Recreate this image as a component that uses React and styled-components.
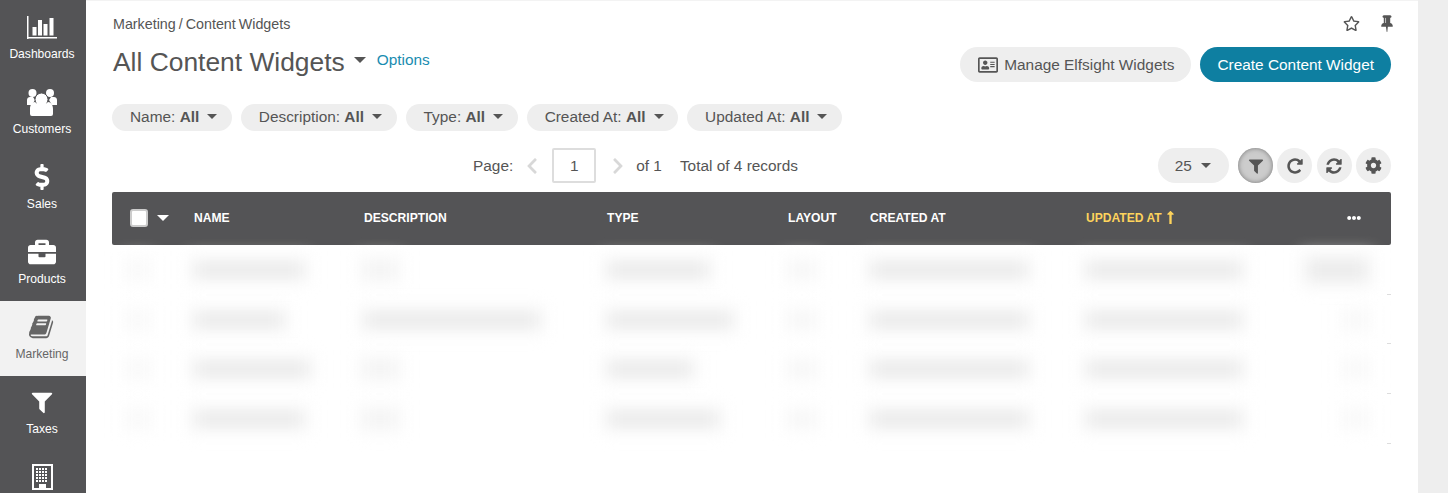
import styled, { createGlobalStyle } from "styled-components";
import {
  FaBriefcase,
  FaChevronLeft,
  FaChevronRight,
  FaCog,
  FaDollarSign,
  FaEllipsisH,
  FaLongArrowAltUp,
  FaRegAddressCard,
  FaRegStar,
} from "react-icons/fa";

const GlobalStyle = createGlobalStyle`
  html, body {
    margin: 0;
    height: 100%;
    overflow: hidden;
    background: #fff;
    font-family: "Liberation Sans", Arial, sans-serif;
    color: #555;
  }
`;

const Page = styled.div`
  display: flex;
  height: 493px;
  overflow: hidden;
`;

const Sidebar = styled.nav`
  width: 86px;
  flex: none;
  padding-top: 1px;
  background: #545456;
  overflow: hidden;
`;

const NavItem = styled.a`
  display: flex;
  flex-direction: column;
  align-items: center;
  height: 75px;
  padding: 11px 2px 0 0;
  box-sizing: border-box;
  font-size: 12.1px;
  line-height: 14px;
  color: ${(p) => (p.$active ? "#666" : "#fff")};
  background: ${(p) => (p.$active ? "#f2f2f2" : "transparent")};
`;

const NavIcon = styled.span`
  display: flex;
  align-items: center;
  justify-content: center;
  height: 30px;
  margin-bottom: 5px;
  font-size: ${(p) => p.$size || 28}px;
`;

const Main = styled.main`
  flex: none;
  width: 1332px;
  box-sizing: border-box;
  padding: 14px 27px 0 26px;
  border-top: 1px solid #f3f3f3;
`;

const Gutter = styled.div`
  flex: 1;
  background: #eee;
`;

const TopBar = styled.div`
  display: flex;
  justify-content: space-between;
  height: 18px;
`;

const Crumbs = styled.div`
  font-size: 14.3px;
  line-height: 18px;
  word-spacing: -1px;
  margin-left: 1px;
`;

const TopIcons = styled.div`
  display: flex;
  align-items: center;
  gap: 18px;
  margin: -2px -5px 0 0;
  font-size: 17px;
  color: #555;
`;

const HeadRow = styled.div`
  display: flex;
  justify-content: space-between;
  height: 71px;
`;

const TitleGroup = styled.div`
  display: flex;
  align-items: flex-start;
  margin-top: 14px;
`;

const Title = styled.h1`
  margin: 0 0 0 1px;
  font-size: 26.4px;
  line-height: 30px;
  font-weight: 400;
  color: #555;
`;

const Caret = styled.span`
  display: inline-block;
  flex: none;
  width: 0;
  height: 0;
  border-left: ${(p) => p.$size || 5}px solid transparent;
  border-right: ${(p) => p.$size || 5}px solid transparent;
  border-top: ${(p) => p.$size || 5}px solid ${(p) => p.$color || "#555"};
`;

const TitleCaret = styled(Caret)`
  margin: 10px 0 0 9px;
`;

const OptionsLink = styled.a`
  margin: 4px 0 0 11px;
  font-size: 15.4px;
  line-height: 18px;
  color: #1a8cb0;
`;

const Actions = styled.div`
  display: flex;
  gap: 9px;
  margin-top: 14px;
`;

const Pill = styled.button`
  display: flex;
  align-items: center;
  gap: 6px;
  height: 35px;
  padding: 0 17px;
  border: 0;
  border-radius: 18px;
  font: 15.4px "Liberation Sans", Arial, sans-serif;
  color: ${(p) => (p.$primary ? "#fff" : "#555")};
  background: ${(p) => (p.$primary ? "#0e7fa1" : "#eee")};
  svg {
    margin-left: 1px;
    font-size: 20px;
  }
`;

const Filters = styled.div`
  display: flex;
  gap: 9px;
`;

const Chip = styled.div`
  display: flex;
  align-items: center;
  gap: 8px;
  height: 27px;
  box-sizing: border-box;
  padding: 0 14.5px 2px 18px;
  border-radius: 14px;
  background: #eee;
  font-size: 15.4px;
  white-space: pre;
  b {
    font-weight: 700;
  }
`;

const Toolbar = styled.div`
  display: flex;
  align-items: center;
  height: 35px;
  margin-top: 17px;
  font-size: 15.4px;
`;

const Pager = styled.div`
  display: flex;
  align-items: center;
  margin-left: 361px;
`;

const PagerArrow = styled.span`
  display: flex;
  margin: ${(p) => p.$margin};
  font-size: 18px;
  color: #d8d8d8;
`;

const PageBox = styled.div`
  width: 44px;
  height: 35px;
  box-sizing: border-box;
  border: 2px solid #ddd;
  border-radius: 2px;
  text-align: center;
  line-height: 31px;
`;

const Total = styled.span`
  margin-left: 18px;
`;

const Tools = styled.div`
  display: flex;
  align-items: center;
  gap: 4.33px;
  margin-left: auto;
`;

const PageSize = styled.div`
  display: flex;
  align-items: center;
  gap: 9px;
  width: 71px;
  height: 35px;
  box-sizing: border-box;
  padding-left: 17px;
  margin-right: 5px;
  border-radius: 18px;
  background: #eee;
`;

const RoundButton = styled.button`
  display: flex;
  align-items: center;
  justify-content: center;
  width: 35px;
  height: 35px;
  padding: 0;
  border: 0;
  border-radius: 50%;
  font-size: 17px;
  color: #555;
  background: ${(p) => (p.$active ? "#ccc" : "#eee")};
  box-shadow: ${(p) => (p.$active ? "inset 0 0 5px #777" : "none")};
`;

const columns = "64px 170px 243px 181px 82px 216px 1fr 40px";

const TableHead = styled.div`
  display: grid;
  grid-template-columns: ${columns};
  align-items: center;
  height: 53px;
  box-sizing: border-box;
  margin-top: 9px;
  padding: 0 30px 2px 18px;
  border-radius: 2px;
  background: #545456;
  font-size: 12.1px;
  font-weight: 700;
  color: #fff;
`;

const CheckCell = styled.div`
  display: flex;
  align-items: center;
  gap: 9px;
`;

const CheckBox = styled.span`
  width: 14px;
  height: 14px;
  border: 2px solid #ccc;
  border-radius: 3px;
  background: #fff;
`;

const HeadCell = styled.div`
  display: flex;
  align-items: center;
  gap: 1px;
  color: ${(p) => (p.$sorted ? "#fdd35c" : "#fff")};
  justify-content: ${(p) => (p.$end ? "flex-end" : "flex-start")};
  svg {
    font-size: ${(p) => (p.$end ? 14 : 15)}px;
  }
`;

const Row = styled.div`
  display: grid;
  grid-template-columns: ${columns};
  align-items: center;
  height: 49.7px;
  padding: 0 26px 0 18px;
  background: linear-gradient(#ddd, #ddd) right bottom / 4px 1px no-repeat;
`;

const Smudge = styled.div`
  height: ${(p) => p.$h || 12}px;
  width: ${(p) => p.$w}px;
  margin-left: ${(p) => p.$x || 0}px;
  justify-self: ${(p) => (p.$end ? "end" : "start")};
  background: ${(p) => p.$tone || "#e6e6e6"};
  box-shadow: 0 0 0 8px ${(p) => p.$halo || "#f9f9f9"};
  filter: blur(8px);
`;

const filters = ["Name", "Description", "Type", "Created At", "Updated At"];

const rows = [
  { name: 106, desc: 28, descTone: "#f2f2f2", type: 98, action: 56, tone: "#eaeaea", h: 18, halo: "#f7f7f7" },
  { name: 86, desc: 172, descTone: "#e6e6e6", type: 122, action: 18, tone: "#f7f7f7", h: 12, halo: "#fcfcfc" },
  { name: 112, desc: 28, descTone: "#f2f2f2", type: 82, action: 18, tone: "#f7f7f7", h: 12, halo: "#fcfcfc" },
  { name: 106, desc: 28, descTone: "#f2f2f2", type: 108, action: 18, tone: "#f7f7f7", h: 12, halo: "#fcfcfc" },
];

function BarChartIcon() {
  return (
    <svg width="30" height="23" viewBox="0 0 30 23" fill="#fff">
      <rect x="0" y="0" width="1.500" height="23" />
      <rect x="0" y="21" width="30" height="1.500" />
      <rect x="5.500" y="11" width="4" height="8.500" />
      <rect x="11" y="4" width="4" height="15.500" />
      <rect x="16.500" y="8" width="4" height="11.500" />
      <rect x="22.500" y="2" width="4" height="17.500" />
    </svg>
  );
}

function UsersIcon() {
  return (
    <svg width="30" height="28" viewBox="0 0 30 28" fill="#fff">
      <circle cx="5.500" cy="5" r="4" />
      <circle cx="23" cy="5" r="4" />
      <path d="M0 12c0-2 1.500-3 3-3h3l2 3-3 5H0z" />
      <path d="M30 12c0-2-1.500-3-3-3h-3l-2 3 3 5h5z" />
      <circle cx="14.500" cy="11.500" r="6.500" stroke="#545456" strokeWidth="1" />
      <path d="M3 21c0-4 2-7 5-7 2 3 11 3 13 0 3 0 5 3 5 7v5q0 2-2 2H5q-2 0-2-2z" />
    </svg>
  );
}

function BookIcon() {
  return (
    <svg width="26" height="26" viewBox="0 0 1792 1792" fill="#666">
      <path d="M1639 478q40 57 18 129l-275 906q-19 64-76.500 107.500t-122.500 43.500h-923q-77 0-148.500-53.500t-99.500-131.500q-24-67-2-127 0-4 3-27t4-37q1-8-3-21.500t-3-19.500q2-11 8-21t16.500-23.500 16.500-23.500q23-38 45-91.500t30-91.500q3-10 .5-30t-.5-28q3-11 17-28t17-23q21-36 42-92t25-90q1-9-2.500-32t.5-28q4-13 22-30.500t22-22.500q19-26 42.500-84.500t27.500-96.500q1-8-3-25.500t-2-26.500q2-8 9-18t18-23 17-21q8-12 16.500-30.500t15-35 16-36 19.500-32 26.500-23.500 36-11.500 47.500 5.500l-1 3q38-9 51-9h761q74 0 114 56t18 130l-274 906q-36 119-71.500 153.500t-128.500 34.500h-869q-27 0-38 15-11 16-1 43 24 70 144 70h923q29 0 56-15.500t35-41.500l300-987q7-22 5-57 38 15 59 43zm-1064 2q-4 13 2 22.500t20 9.500h608q13 0 25.500-9.500t16.500-22.500l21-64q4-13-2-22.500t-20-9.500h-608q-13 0-25.500 9.500t-16.500 22.500zm-83 256q-4 13 2 22.500t20 9.500h608q13 0 25.500-9.500t16.500-22.500l21-64q4-13-2-22.500t-20-9.500h-608q-13 0-25.500 9.500t-16.500 22.500z" />
    </svg>
  );
}

function FunnelIcon({ size = 26 }) {
  return (
    <svg width={size} height={size} viewBox="0 0 1792 1792" fill="currentColor">
      <path d="M1595 295q17 41-14 70l-493 493v742q0 42-39 59-13 5-25 5-27 0-45-19l-256-256q-19-19-19-45v-486l-493-493q-31-29-14-70 17-39 59-39h1280q42 0 59 39z" />
    </svg>
  );
}

function BuildingIcon() {
  const windows = [];
  for (let y = 4; y <= 16; y += 3) {
    for (let x = 4; x <= 13; x += 3) {
      windows.push(<rect key={`${x}-${y}`} x={x} y={y} width="2" height="2" />);
    }
  }
  return (
    <svg width="21" height="26" viewBox="0 0 21 26" fill="#fff">
      <path d="M0 0h21v26H0zM2 2v22h5v-4h7v4h5V2z" fillRule="evenodd" />
      {windows}
    </svg>
  );
}

function PinIcon() {
  return (
    <svg width="18" height="18" viewBox="0 0 1792 1792" fill="currentColor">
      <path d="M800 864v-448q0-14-9-23t-23-9-23 9-9 23v448q0 14 9 23t23 9 23-9 9-23zm672 352q0 26-19 45t-45 19h-429l-51 483q-2 12-10.500 20.500t-20.500 8.500h-1q-27 0-32-27l-76-485h-404q-26 0-45-19t-19-45q0-123 78.500-221.500t177.500-98.500v-512q-52 0-90-38t-38-90 38-90 90-38h640q52 0 90 38t38 90-38 90-90 38v512q99 0 177.500 98.500t78.500 221.500z" />
    </svg>
  );
}

function RepeatIcon() {
  return (
    <svg width="18" height="18" viewBox="0 0 1792 1792" fill="currentColor">
      <path d="M1664 256v448q0 26-19 45t-45 19h-448q-42 0-59-40-17-39 14-69l138-138q-148-137-349-137-104 0-198.500 40.500t-163.500 109.500-109.500 163.500-40.500 198.500 40.500 198.500 109.500 163.500 163.500 109.500 198.500 40.500q119 0 225-52t179-147q7-10 23-12 15 0 25 9l137 138q9 8 9.500 20.500t-7.500 22.500q-109 132-264 204.500t-327 72.500q-156 0-298-61t-245-164-164-245-61-298 61-298 164-245 245-164 298-61q147 0 284.500 55.500t244.500 156.500l130-129q29-31 70-14 39 17 39 59z" />
    </svg>
  );
}

function RefreshIcon() {
  return (
    <svg width="18" height="18" viewBox="0 0 1792 1792" fill="currentColor">
      <path d="M1639 1056q0 5-1 7-64 268-268 434.500t-478 166.500q-146 0-282.500-55t-243.500-157l-129 129q-19 19-45 19t-45-19-19-45v-448q0-26 19-45t45-19h448q26 0 45 19t19 45-19 45l-137 137q71 66 161 102t187 36q134 0 250-65t186-179q11-17 53-117 8-23 30-23h192q13 0 22.500 9.500t9.500 22.500zm25-800v448q0 26-19 45t-45 19h-448q-26 0-45-19t-19-45 19-45l138-138q-148-137-349-137-134 0-250 65t-186 179q-11 17-53 117-8 23-30 23h-199q-13 0-22.500-9.500t-9.500-22.500v-7q65-268 270-434.500t480-166.500q146 0 284 55.500t245 156.500l130-129q19-19 45-19t45 19 19 45z" />
    </svg>
  );
}

export default function App() {
  return (
    <>
      <GlobalStyle />
      <Page>
        <Sidebar>
          <NavItem>
            <NavIcon><BarChartIcon /></NavIcon>
            Dashboards
          </NavItem>
          <NavItem>
            <NavIcon><UsersIcon /></NavIcon>
            Customers
          </NavItem>
          <NavItem>
            <NavIcon $size={26}><FaDollarSign /></NavIcon>
            Sales
          </NavItem>
          <NavItem>
            <NavIcon $size={28}><FaBriefcase /></NavIcon>
            Products
          </NavItem>
          <NavItem $active>
            <NavIcon><BookIcon /></NavIcon>
            Marketing
          </NavItem>
          <NavItem>
            <NavIcon><FunnelIcon /></NavIcon>
            Taxes
          </NavItem>
          <NavItem>
            <NavIcon><BuildingIcon /></NavIcon>
          </NavItem>
        </Sidebar>

        <Main>
          <TopBar>
            <Crumbs>Marketing / Content Widgets</Crumbs>
            <TopIcons>
              <FaRegStar />
              <PinIcon />
            </TopIcons>
          </TopBar>

          <HeadRow>
            <TitleGroup>
              <Title>All Content Widgets</Title>
              <TitleCaret $size={6} />
              <OptionsLink>Options</OptionsLink>
            </TitleGroup>
            <Actions>
              <Pill><FaRegAddressCard />Manage Elfsight Widgets</Pill>
              <Pill $primary>Create Content Widget</Pill>
            </Actions>
          </HeadRow>

          <Filters>
            {filters.map((label) => (
              <Chip key={label}>
                <span>{label}: <b>All</b></span>
                <Caret />
              </Chip>
            ))}
          </Filters>

          <Toolbar>
            <Pager>
              Page:
              <PagerArrow $margin="0 11px 0 10px"><FaChevronLeft /></PagerArrow>
              <PageBox>1</PageBox>
              <PagerArrow $margin="0 9px 0 13px"><FaChevronRight /></PagerArrow>
              of 1
              <Total>Total of 4 records</Total>
            </Pager>
            <Tools>
              <PageSize>25 <Caret /></PageSize>
              <RoundButton $active><FunnelIcon size={18} /></RoundButton>
              <RoundButton><RepeatIcon /></RoundButton>
              <RoundButton><RefreshIcon /></RoundButton>
              <RoundButton><FaCog /></RoundButton>
            </Tools>
          </Toolbar>

          <TableHead>
            <CheckCell>
              <CheckBox />
              <Caret $color="#fff" $size={6} />
            </CheckCell>
            <HeadCell>NAME</HeadCell>
            <HeadCell>DESCRIPTION</HeadCell>
            <HeadCell>TYPE</HeadCell>
            <HeadCell>LAYOUT</HeadCell>
            <HeadCell>CREATED AT</HeadCell>
            <HeadCell $sorted>UPDATED AT <FaLongArrowAltUp /></HeadCell>
            <HeadCell $end><FaEllipsisH /></HeadCell>
          </TableHead>

          {rows.map((row, i) => (
            <Row key={i}>
              <Smudge $w={16} $tone="#f7f7f7" $halo="#fcfcfc" />
              <Smudge $w={row.name} $x={2} />
              <Smudge $w={row.desc} $x={2} $tone={row.descTone} />
              <Smudge $w={row.type} $x={2} />
              <Smudge $w={22} $x={3} $tone="#f4f4f4" $halo="#fcfcfc" />
              <Smudge $w={154} $x={2} />
              <Smudge $w={152} $x={2} />
              <Smudge $w={row.action} $h={row.h} $tone={row.tone} $halo={row.halo} $end />
            </Row>
          ))}
        </Main>

        <Gutter />
      </Page>
    </>
  );
}
